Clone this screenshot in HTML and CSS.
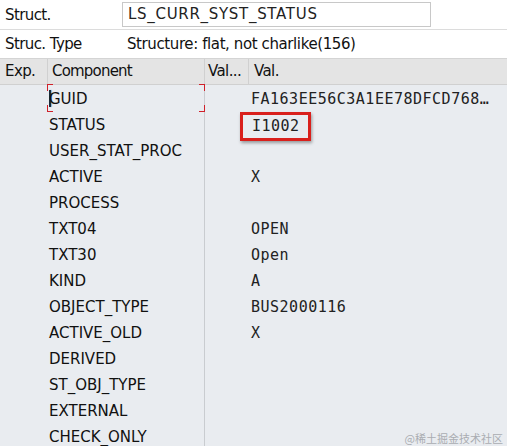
FILE: index.html
```html
<!DOCTYPE html>
<html>
<head><meta charset="utf-8"><link rel="stylesheet" href="styles.css"></head>
<body>
<div class="top">
  <div class="frow r1"><span class="lbl">Struct.</span><div class="inp">LS_CURR_SYST_STATUS</div></div>
  <div class="frow r2"><span class="lbl">Struc. Type</span><span class="val">Structure: flat, not charlike(156)</span></div>
</div>
<div class="grid">
  <div class="hdr">
    <div class="c1">Exp.</div><div class="c2">Component</div><div class="c3">Val...</div><div class="c4">Val.</div>
  </div>
  <div class="body">
    <div class="row"><div class="c1"></div><div class="c2 focus"><span class="caret"></span>GUID<i class="br tl"></i><i class="br tr"></i><i class="br bl"></i><i class="br brr"></i></div><div class="c3"></div><div class="c4 mono">FA163EE56C3A1EE78DFCD768…</div></div>
    <div class="row"><div class="c1"></div><div class="c2">STATUS</div><div class="c3"></div><div class="c4 mono"><span class="hl">I1002</span></div></div>
    <div class="row"><div class="c1"></div><div class="c2">USER_STAT_PROC</div><div class="c3"></div><div class="c4 mono"></div></div>
    <div class="row"><div class="c1"></div><div class="c2">ACTIVE</div><div class="c3"></div><div class="c4 mono">X</div></div>
    <div class="row"><div class="c1"></div><div class="c2">PROCESS</div><div class="c3"></div><div class="c4 mono"></div></div>
    <div class="row"><div class="c1"></div><div class="c2">TXT04</div><div class="c3"></div><div class="c4 mono">OPEN</div></div>
    <div class="row"><div class="c1"></div><div class="c2">TXT30</div><div class="c3"></div><div class="c4 mono">Open</div></div>
    <div class="row"><div class="c1"></div><div class="c2">KIND</div><div class="c3"></div><div class="c4 mono">A</div></div>
    <div class="row"><div class="c1"></div><div class="c2">OBJECT_TYPE</div><div class="c3"></div><div class="c4 mono">BUS2000116</div></div>
    <div class="row"><div class="c1"></div><div class="c2">ACTIVE_OLD</div><div class="c3"></div><div class="c4 mono">X</div></div>
    <div class="row"><div class="c1"></div><div class="c2">DERIVED</div><div class="c3"></div><div class="c4 mono"></div></div>
    <div class="row"><div class="c1"></div><div class="c2">ST_OBJ_TYPE</div><div class="c3"></div><div class="c4 mono"></div></div>
    <div class="row"><div class="c1"></div><div class="c2">EXTERNAL</div><div class="c3"></div><div class="c4 mono"></div></div>
    <div class="row"><div class="c1"></div><div class="c2">CHECK_ONLY</div><div class="c3"></div><div class="c4 mono"></div></div>
  </div>
  <div class="wm">@稀土掘金技术社区</div>
</div>
</body>
</html>
```
FILE: styles.css
```css
html, body { margin: 0; padding: 0; }
body {
  width: 507px; height: 446px; overflow: hidden;
  font-family: "DejaVu Sans", "Liberation Sans", sans-serif;
  font-size: 15px; color: #111; background: #fff;
  position: relative;
}
.top { background: #fff; }
.frow { display: flex; align-items: center; }
.r1 { height: 29px; border-bottom: 1px solid #dcdcdc; }
.r2 { height: 28px; }
.lbl { width: 122px; padding-left: 5px; box-sizing: border-box; letter-spacing: -0.6px; }
.inp {
  width: 309px; height: 25px; box-sizing: border-box; border: 1px solid #c8c8c8;
  padding-left: 5px; line-height: 23px; letter-spacing: 0.7px; color: #222;
}
.val { padding-left: 5px; letter-spacing: -0.4px; }
.grid { position: relative; }
.hdr {
  display: flex; height: 27px; background: #e4e4e4;
  border-top: 1px solid #d4d4d4; border-bottom: 1px solid #d0d0d0; box-sizing: border-box;
}
.hdr > div { line-height: 25px; padding-left: 5px; box-sizing: border-box; border-right: 1px solid #d0d0d0; letter-spacing: -0.6px; overflow: hidden; white-space: nowrap; }
.c1 { width: 48px; }
.c2 { width: 157px; }
.c3 { width: 44px; }
.c4 { flex: 1; }
.hdr .c2 { padding-left: 4px; letter-spacing: -0.8px; }
.hdr .c3 { padding-left: 3px; }
.hdr .c4 { border-right: none; }
.body { background: #e9ecf0; height: 362px; padding-top: 1px; box-sizing: border-box; }
.row { display: flex; height: 26px; }
.row > div { line-height: 26px; box-sizing: border-box; white-space: nowrap; }
.row .c2 { padding-left: 1px; border-right: 1px solid #c9ccd0; position: relative; }
.row .c4 { padding-left: 2px; }
.mono { font-family: "DejaVu Sans Mono", "Liberation Mono", monospace; font-size: 15px; letter-spacing: 0.5px; color: #222; }
.caret { display: inline-block; width: 2px; height: 17px; background: #1a2a3a; vertical-align: -3px; margin-right: -2px; box-shadow: 1px 0 1px #7fb3d8; }
.br { position: absolute; width: 5px; height: 6px; border-color: #d0202a; border-style: solid; border-width: 0; }
.tl { left: -1px; top: -2px; border-left-width: 1px; border-top-width: 1px; }
.tr { right: -1px; top: -2px; border-right-width: 1px; border-top-width: 1px; }
.bl { left: -1px; bottom: 0; border-left-width: 1px; border-bottom-width: 1px; }
.brr { right: -1px; bottom: 0; border-right-width: 1px; border-bottom-width: 1px; }
.hl {
  display: inline-block; position: relative; margin-left: -11px; padding: 0 8px 0 9px;
  line-height: 23px; border: 3px solid #d9201c; box-shadow: 1px 2px 3px rgba(0,0,0,0.35);
}
.wm {
  position: absolute; right: 4px; bottom: 1px; font-family: "Noto Sans CJK SC", sans-serif;
  font-size: 11px; color: #a9adb2;
}
```
